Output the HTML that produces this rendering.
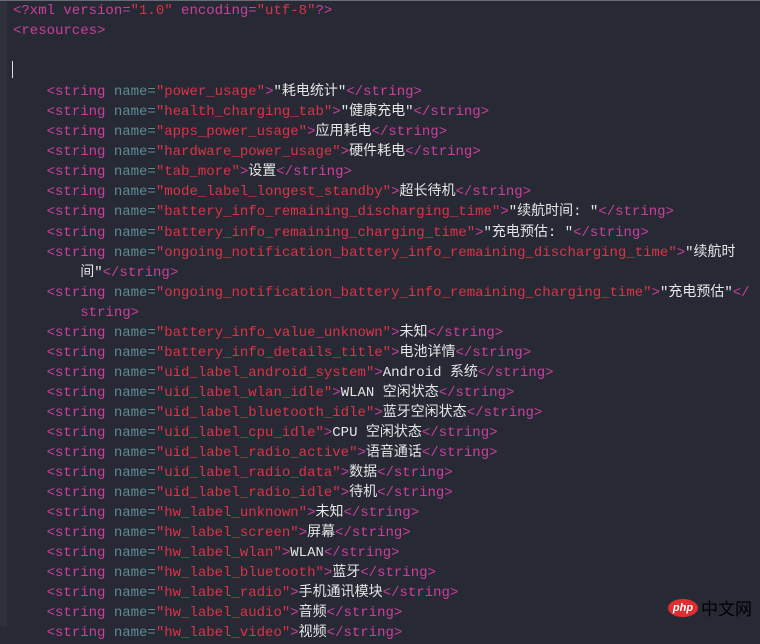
<!DOCTYPE html>
<html><head><meta charset="utf-8"><style>
html,body{margin:0;padding:0;width:760px;height:627px;overflow:hidden;background:#272935;}
.g{position:absolute;left:0;top:0;width:7px;height:627px;background:#2e303b;}
.tb{position:absolute;left:0;top:0;width:760px;height:1px;background:#6a6c75;}
pre{position:absolute;left:13px;top:1px;margin:0;font-family:"Liberation Mono","Noto Sans CJK SC",monospace;font-size:14px;line-height:20.05px;color:#e6e6e6;white-space:pre;}
.t{color:#c8409c}.a{color:#5e8b92}.s{color:#dc3347}
.cur{display:inline-block;width:1px;height:17px;background:#ddd;vertical-align:-3px;margin-left:-1px}
.logo{position:absolute;left:668px;top:599px;width:30px;height:18px;border-radius:50%;background:#e02d2d;color:#fff;font:italic bold 11px "Liberation Sans",sans-serif;text-align:center;line-height:18px}
.cn{position:absolute;left:701px;top:598px;font:17px "Noto Sans CJK SC",sans-serif;color:#000;line-height:20px}
</style></head><body>
<div class="g"></div><div class="tb"></div>
<pre><span class="t">&lt;?xml version=</span><span class="s">"1.0"</span><span class="t"> encoding=</span><span class="s">"utf-8"</span><span class="t">?&gt;</span>
<span class="t">&lt;resources&gt;</span>

<span class="cur"></span>
    <span class="t">&lt;string </span><span class="a">name=</span><span class="s">"power_usage"</span><span class="t">&gt;</span>"耗电统计"<span class="t">&lt;/string&gt;</span>
    <span class="t">&lt;string </span><span class="a">name=</span><span class="s">"health_charging_tab"</span><span class="t">&gt;</span>"健康充电"<span class="t">&lt;/string&gt;</span>
    <span class="t">&lt;string </span><span class="a">name=</span><span class="s">"apps_power_usage"</span><span class="t">&gt;</span>应用耗电<span class="t">&lt;/string&gt;</span>
    <span class="t">&lt;string </span><span class="a">name=</span><span class="s">"hardware_power_usage"</span><span class="t">&gt;</span>硬件耗电<span class="t">&lt;/string&gt;</span>
    <span class="t">&lt;string </span><span class="a">name=</span><span class="s">"tab_more"</span><span class="t">&gt;</span>设置<span class="t">&lt;/string&gt;</span>
    <span class="t">&lt;string </span><span class="a">name=</span><span class="s">"mode_label_longest_standby"</span><span class="t">&gt;</span>超长待机<span class="t">&lt;/string&gt;</span>
    <span class="t">&lt;string </span><span class="a">name=</span><span class="s">"battery_info_remaining_discharging_time"</span><span class="t">&gt;</span>"续航时间: "<span class="t">&lt;/string&gt;</span>
    <span class="t">&lt;string </span><span class="a">name=</span><span class="s">"battery_info_remaining_charging_time"</span><span class="t">&gt;</span>"充电预估: "<span class="t">&lt;/string&gt;</span>
    <span class="t">&lt;string </span><span class="a">name=</span><span class="s">"ongoing_notification_battery_info_remaining_discharging_time"</span><span class="t">&gt;</span>"续航时
        间"<span class="t">&lt;/string&gt;</span>
    <span class="t">&lt;string </span><span class="a">name=</span><span class="s">"ongoing_notification_battery_info_remaining_charging_time"</span><span class="t">&gt;</span>"充电预估"<span class="t">&lt;/</span>
        <span class="t">string&gt;</span>
    <span class="t">&lt;string </span><span class="a">name=</span><span class="s">"battery_info_value_unknown"</span><span class="t">&gt;</span>未知<span class="t">&lt;/string&gt;</span>
    <span class="t">&lt;string </span><span class="a">name=</span><span class="s">"battery_info_details_title"</span><span class="t">&gt;</span>电池详情<span class="t">&lt;/string&gt;</span>
    <span class="t">&lt;string </span><span class="a">name=</span><span class="s">"uid_label_android_system"</span><span class="t">&gt;</span>Android 系统<span class="t">&lt;/string&gt;</span>
    <span class="t">&lt;string </span><span class="a">name=</span><span class="s">"uid_label_wlan_idle"</span><span class="t">&gt;</span>WLAN 空闲状态<span class="t">&lt;/string&gt;</span>
    <span class="t">&lt;string </span><span class="a">name=</span><span class="s">"uid_label_bluetooth_idle"</span><span class="t">&gt;</span>蓝牙空闲状态<span class="t">&lt;/string&gt;</span>
    <span class="t">&lt;string </span><span class="a">name=</span><span class="s">"uid_label_cpu_idle"</span><span class="t">&gt;</span>CPU 空闲状态<span class="t">&lt;/string&gt;</span>
    <span class="t">&lt;string </span><span class="a">name=</span><span class="s">"uid_label_radio_active"</span><span class="t">&gt;</span>语音通话<span class="t">&lt;/string&gt;</span>
    <span class="t">&lt;string </span><span class="a">name=</span><span class="s">"uid_label_radio_data"</span><span class="t">&gt;</span>数据<span class="t">&lt;/string&gt;</span>
    <span class="t">&lt;string </span><span class="a">name=</span><span class="s">"uid_label_radio_idle"</span><span class="t">&gt;</span>待机<span class="t">&lt;/string&gt;</span>
    <span class="t">&lt;string </span><span class="a">name=</span><span class="s">"hw_label_unknown"</span><span class="t">&gt;</span>未知<span class="t">&lt;/string&gt;</span>
    <span class="t">&lt;string </span><span class="a">name=</span><span class="s">"hw_label_screen"</span><span class="t">&gt;</span>屏幕<span class="t">&lt;/string&gt;</span>
    <span class="t">&lt;string </span><span class="a">name=</span><span class="s">"hw_label_wlan"</span><span class="t">&gt;</span>WLAN<span class="t">&lt;/string&gt;</span>
    <span class="t">&lt;string </span><span class="a">name=</span><span class="s">"hw_label_bluetooth"</span><span class="t">&gt;</span>蓝牙<span class="t">&lt;/string&gt;</span>
    <span class="t">&lt;string </span><span class="a">name=</span><span class="s">"hw_label_radio"</span><span class="t">&gt;</span>手机通讯模块<span class="t">&lt;/string&gt;</span>
    <span class="t">&lt;string </span><span class="a">name=</span><span class="s">"hw_label_audio"</span><span class="t">&gt;</span>音频<span class="t">&lt;/string&gt;</span>
    <span class="t">&lt;string </span><span class="a">name=</span><span class="s">"hw_label_video"</span><span class="t">&gt;</span>视频<span class="t">&lt;/string&gt;</span></pre>
<div class="logo">php</div><div class="cn">中文网</div>
</body></html>
